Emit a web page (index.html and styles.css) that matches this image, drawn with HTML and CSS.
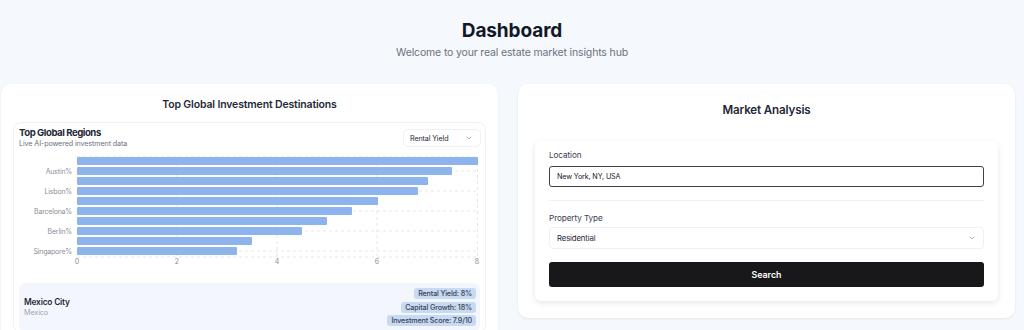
FILE: index.html
```html
<!DOCTYPE html>
<html>
<head>
<meta charset="utf-8">
<link rel="stylesheet" href="styles.css">
</head>
<body>
<header class="page-head">
  <h1 class="page-title">Dashboard</h1>
  <p class="page-sub">Welcome to your real estate market insights hub</p>
</header>
<main class="grid">
  <section class="card">
    <h2 class="card-title">Top Global Investment Destinations</h2>
    <div class="chart-card">
      <div class="chart-head">
        <div>
          <div class="chart-title">Top Global Regions</div>
          <div class="chart-sub">Live AI-powered investment data</div>
        </div>
        <div class="dropdown">
          <span>Rental Yield</span>
          <svg class="chev" width="8" height="8" viewBox="0 0 24 24" fill="none" stroke="#9ca3af" stroke-width="2.5" stroke-linecap="round" stroke-linejoin="round"><path d="M6 9l6 6 6-6"/></svg>
        </div>
      </div>
      <svg class="chart" width="461" height="118" viewBox="0 0 461 118">
        <g stroke="#e5e7eb" stroke-width="1" stroke-dasharray="3 3">
          <line x1="58" y1="4" x2="459" y2="4"/>
          <line x1="58" y1="18" x2="459" y2="18"/>
          <line x1="58" y1="38" x2="459" y2="38"/>
          <line x1="58" y1="58" x2="459" y2="58"/>
          <line x1="58" y1="78" x2="459" y2="78"/>
          <line x1="58" y1="98" x2="459" y2="98"/>
          <line x1="58" y1="104" x2="459" y2="104"/>
          <line x1="158" y1="4" x2="158" y2="104"/>
          <line x1="258" y1="4" x2="258" y2="104"/>
          <line x1="358" y1="4" x2="358" y2="104"/>
          <line x1="458.5" y1="4" x2="458.5" y2="104"/>
        </g>
        <g fill="#8db4ec">
          <rect x="58" y="4" width="401" height="8" rx="1"/>
          <rect x="58" y="14" width="375" height="8" rx="1"/>
          <rect x="58" y="24" width="351" height="8" rx="1"/>
          <rect x="58" y="34" width="341" height="8" rx="1"/>
          <rect x="58" y="44" width="301" height="8" rx="1"/>
          <rect x="58" y="54" width="275" height="8" rx="1"/>
          <rect x="58" y="64" width="250" height="8" rx="1"/>
          <rect x="58" y="74" width="225" height="8" rx="1"/>
          <rect x="58" y="84" width="175" height="8" rx="1"/>
          <rect x="58" y="94" width="160" height="8" rx="1"/>
        </g>
        <g class="cat" text-anchor="end">
          <text x="53" y="20.5">Austin%</text>
          <text x="53" y="40.5">Lisbon%</text>
          <text x="53" y="60.5">Barcelona%</text>
          <text x="53" y="80.5">Berlin%</text>
          <text x="53" y="100.5">Singapore%</text>
        </g>
        <g class="tick" text-anchor="middle">
          <text x="58" y="111">0</text>
          <text x="158" y="111">2</text>
          <text x="258" y="111">4</text>
          <text x="358" y="111">6</text>
          <text x="458" y="111">8</text>
        </g>
      </svg>
      <div class="dest">
        <div class="dest-name">
          <div class="dest-city">Mexico City</div>
          <div class="dest-country">Mexico</div>
        </div>
        <div class="badges">
          <span class="badge">Rental Yield: 8%</span>
          <span class="badge">Capital Growth: 18%</span>
          <span class="badge">Investment Score: 7.9/10</span>
        </div>
      </div>
    </div>
  </section>
  <section class="card card-right">
    <h2 class="card-title market-title">Market Analysis</h2>
    <div class="form-card">
      <label class="field-label">Location</label>
      <div class="input">New York, NY, USA</div>
      <div class="sep"></div>
      <label class="field-label">Property Type</label>
      <div class="select">
        <span>Residential</span>
        <svg width="8" height="8" viewBox="0 0 24 24" fill="none" stroke="#9ca3af" stroke-width="2.5" stroke-linecap="round" stroke-linejoin="round"><path d="M6 9l6 6 6-6"/></svg>
      </div>
      <button class="btn">Search</button>
    </div>
  </section>
</main>
</body>
</html>
```

FILE: styles.css
```css
* { box-sizing: border-box; }
html, body { margin: 0; padding: 0; }
body {
  background: #f5f8fc;
  font-family: Inter, "Noto Sans", sans-serif;
  color: #1f2937;
  height: 330px;
  overflow: hidden;
}
.page-head {
  text-align: center;
  padding-top: 19px;
  height: 84px;
}
.page-title {
  margin: 0;
  font-size: 19px;
  line-height: 23px;
  font-weight: 700;
  color: #111827;
  letter-spacing: -0.1px;
}
.page-sub {
  margin: 5px 0 0;
  font-size: 10.5px;
  line-height: 12px;
  letter-spacing: -0.15px;
  color: #6b7280;
}
.grid {
  display: grid;
  grid-template-columns: 497px 497px;
  column-gap: 20px;
  padding-left: 1px;
  align-items: start;
}
.card {
  background: #fff;
  border-radius: 10px;
  box-shadow: 0 1px 3px rgba(15, 23, 42, 0.06);
  padding: 0 12px 0 12px;
  height: 300px;
}
.card-title {
  margin: 0;
  text-align: center;
  font-size: 10.5px;
  font-weight: 600;
  line-height: 14px;
  letter-spacing: -0.15px;
  padding: 14px 0 10px;
  color: #1f2937;
}
.chart-card {
  border: 1px solid #eef1f5;
  border-radius: 8px;
  padding: 4px 5px 0;
}
.chart-head {
  display: flex;
  justify-content: space-between;
  align-items: flex-start;
}
.chart-title {
  font-size: 9.6px;
  font-weight: 700;
  line-height: 12px;
  letter-spacing: -0.45px;
  color: #1f2937;
}
.chart-sub {
  font-size: 7.2px;
  line-height: 10px;
  letter-spacing: -0.12px;
  color: #6b7280;
}
.dropdown {
  margin-top: 2px;
  width: 78px;
  height: 18px;
  border: 1px solid #eef0f3;
  border-radius: 5px;
  display: flex;
  align-items: center;
  justify-content: space-between;
  padding: 0 7px 0 6px;
  font-size: 7.2px;
  letter-spacing: -0.12px;
  color: #1f2937;
  margin-right: -1px;
}
.chart { display: block; margin-top: 4px; }
.cat { font-size: 7px; letter-spacing: -0.2px; fill: #8a8f98; }
.tick { font-size: 7px; fill: #8a8f98; }
.dest {
  margin-top: 12px;
  background: #f3f7fd;
  border-radius: 6px;
  padding: 5px 4px 6px 5px;
  display: flex;
  justify-content: space-between;
  align-items: center;
}
.dest-city { font-size: 8.4px; font-weight: 600; line-height: 11px; letter-spacing: -0.2px; color: #1f2937; }
.dest-country { font-size: 7.2px; line-height: 10px; letter-spacing: -0.1px; color: #9ca3af; }
.badges {
  display: flex;
  flex-direction: column;
  align-items: flex-end;
  gap: 2.5px;
}
.badge {
  background: #c8daf3;
  border-radius: 3px;
  font-size: 7.2px;
  font-weight: 500;
  line-height: 11px;
  letter-spacing: -0.15px;
  padding: 0 4px;
  color: #374151;
}
.card-right {
  height: 234px;
  padding: 0 17px;
  box-shadow: 0 1px 3px rgba(15, 23, 42, 0.08);
}
.market-title {
  font-size: 11.6px;
  letter-spacing: -0.15px;
  padding: 19px 0 24px;
}
.form-card {
  background: #fff;
  border-radius: 6px;
  box-shadow: 0 2px 6px rgba(15, 23, 42, 0.10);
  padding: 8px 14px 14px;
  display: flex;
  flex-direction: column;
}
.field-label {
  font-size: 8.2px;
  line-height: 12px;
  letter-spacing: -0.1px;
  color: #374151;
}
.input {
  margin-top: 5px;
  height: 21px;
  border: 1px solid #3f3f46;
  border-radius: 3px;
  font-size: 7.2px;
  letter-spacing: -0.15px;
  line-height: 19px;
  padding: 0 7px;
  color: #111827;
}
.sep {
  height: 1px;
  background: #eef0f3;
  margin: 13px 0 11px;
}
.select {
  margin-top: 3px;
  height: 22px;
  border: 1px solid #eef0f3;
  border-radius: 4px;
  display: flex;
  align-items: center;
  justify-content: space-between;
  padding: 0 7px;
  font-size: 7.8px;
  letter-spacing: -0.15px;
  color: #1f2937;
}
.btn {
  margin-top: 13px;
  height: 25px;
  border: 0;
  border-radius: 3px;
  background: #18181b;
  color: #fff;
  font-family: inherit;
  font-size: 8.8px;
  font-weight: 600;
}
```
